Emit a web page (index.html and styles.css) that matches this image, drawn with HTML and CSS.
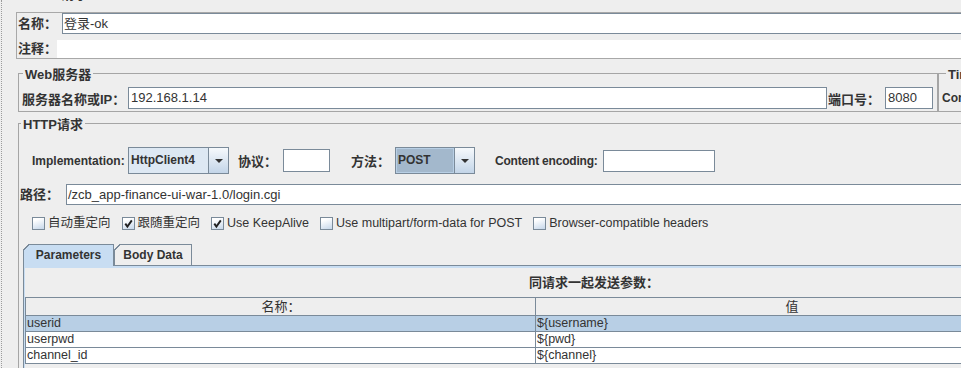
FILE: index.html
```html
<!DOCTYPE html>
<html lang="zh">
<head>
    <meta charset="UTF-8">
    <meta name="viewport" content="width=device-width, initial-scale=1.0">
    <title>HTTP请求</title>
    <link rel="stylesheet" href="styles.css">
</head>
<body>
<div class="screen">
    <div class="gutter"></div>
    <div class="main">
        <div class="cut-title"><span>HTTP请求</span></div>

        <div class="namebox">
            <div class="name-row">
                <span class="lbl cn name-lbl">名称：</span>
                <div class="field name-field">登录-ok</div>
            </div>
            <div class="comment-row">
                <span class="lbl cn comment-lbl">注释：</span>
                <div class="comment-field"></div>
            </div>
        </div>

        <div class="server-row">
            <fieldset class="group web-group">
                <legend>Web服务器</legend>
                <div class="row">
                    <span class="lbl cn host-lbl">服务器名称或IP：</span>
                    <div class="field host-field">192.168.1.14</div>
                    <span class="lbl cn port-lbl">端口号：</span>
                    <div class="field port-field">8080</div>
                </div>
            </fieldset>
            <fieldset class="group timeout-group">
                <legend>Timeouts (milliseconds)</legend>
                <div class="row">
                    <span class="lbl connect-lbl">Connect:</span>
                    <div class="field connect-field"></div>
                </div>
            </fieldset>
        </div>

        <fieldset class="group http-group">
            <legend>HTTP请求</legend>

            <div class="impl-row">
                <span class="lbl impl-lbl">Implementation:</span>
                <div class="combo impl-combo">
                    <span class="combo-value">HttpClient4</span>
                    <span class="combo-btn"><svg width="8" height="4" viewBox="0 0 8 4"><path d="M0 0H8L4 4Z" fill="#333"/></svg></span>
                </div>
                <span class="lbl cn proto-lbl">协议：</span>
                <div class="field proto-field"></div>
                <span class="lbl cn method-lbl">方法：</span>
                <div class="combo method-combo">
                    <span class="combo-value">POST</span>
                    <span class="combo-btn"><svg width="8" height="4" viewBox="0 0 8 4"><path d="M0 0H8L4 4Z" fill="#333"/></svg></span>
                </div>
                <span class="lbl enc-lbl">Content encoding:</span>
                <div class="field enc-field"></div>
            </div>

            <div class="path-row">
                <span class="lbl cn path-lbl">路径：</span>
                <div class="field path-field">/zcb_app-finance-ui-war-1.0/login.cgi</div>
            </div>

            <div class="checks">
                <div class="check"><span class="cb"></span>自动重定向</div>
                <div class="check"><span class="cb"><svg viewBox="0 0 11 11"><path d="M2.3 5.6L4.4 8.6L8.8 2.4" fill="none" stroke="#222" stroke-width="1.9"/></svg></span>跟随重定向</div>
                <div class="check"><span class="cb"><svg viewBox="0 0 11 11"><path d="M2.3 5.6L4.4 8.6L8.8 2.4" fill="none" stroke="#222" stroke-width="1.9"/></svg></span>Use KeepAlive</div>
                <div class="check"><span class="cb"></span>Use multipart/form-data for POST</div>
                <div class="check"><span class="cb"></span>Browser-compatible headers</div>
            </div>

            <div class="tabpane">
                <div class="tabs">
                    <div class="tab active">Parameters</div>
                    <div class="tab body-tab">Body Data</div>
                </div>
                <div class="tab-panel">
                    <div class="params-title">同请求一起发送参数：</div>
                    <table class="params">
                        <thead>
                            <tr><th class="col-name">名称：</th><th class="col-value">值</th></tr>
                        </thead>
                        <tbody>
                            <tr class="sel"><td>userid</td><td>${username}</td></tr>
                            <tr><td>userpwd</td><td>${pwd}</td></tr>
                            <tr><td>channel_id</td><td>${channel}</td></tr>
                        </tbody>
                    </table>
                </div>
            </div>
        </fieldset>
    </div>
</div>
</body>
</html>
```

FILE: styles.css
```css
body {
    margin: 0;
    background-color: #eeeeee;
    font-family: "Liberation Sans", "Noto Sans CJK SC", sans-serif;
    font-size: 12px;
    color: #333;
}
.screen {
    display: flex;
    width: 961px;
    height: 368px;
    overflow: hidden;
}
.gutter {
    flex: none;
    margin-left: 1px;
    border-left: 1px dotted #9c9c9c;
}
.main {
    flex: none;
    width: 1180px;
    margin-left: 14px;
}
.cut-title {
    height: 12px;
    overflow: hidden;
    padding-left: 8px;
}
.cut-title span {
    display: block;
    margin-top: -14px;
    font-size: 14px;
    font-weight: bold;
    line-height: 16px;
}

/* name / comment */
.namebox {
    border: 1px solid #a8a8a8;
    border-right: none;
}
.name-row {
    display: flex;
    height: 21px;
}
.comment-row {
    display: flex;
    height: 18px;
    margin-top: 6px;
}
.lbl {
    flex: none;
    font-weight: bold;
    font-size: 12px;
    white-space: nowrap;
}
.lbl.cn {
    font-size: 13px;
}
.name-lbl {
    width: 44px;
    padding-left: 1px;
    line-height: 21px;
}
.comment-lbl {
    width: 39px;
    padding-left: 1px;
    line-height: 18px;
}
.field {
    flex: none;
    box-sizing: border-box;
    height: 22px;
    border: 1px solid #7a8a99;
    background-color: #fff;
    font-size: 13px;
    line-height: 20px;
    padding-left: 2px;
    white-space: nowrap;
    overflow: hidden;
}
.name-field {
    flex: 1;
    height: 21px;
    line-height: 19px;
    padding-left: 1px;
}
.comment-field {
    flex: 1;
    background-color: #fff;
}

/* titled groups */
.server-row {
    display: flex;
    margin: 4px 0 0 2px;
}
fieldset.group {
    box-sizing: border-box;
    margin: 0;
    padding: 4px 3px 2px;
    border: 1px solid #a5a5a5;
    min-width: 0;
}
legend {
    margin-left: 1px;
    padding: 4px 2px 0;
    font-size: 13px;
    font-weight: bold;
    line-height: 16px;
}
.web-group {
    flex: none;
    width: 920px;
}
.timeout-group {
    flex: none;
    width: 240px;
    margin-left: 4px;
    padding-left: 2px;
}
.timeout-group legend {
    margin-left: 4px;
}
.row {
    display: flex;
    align-items: center;
    height: 22px;
}
.host-lbl {
    width: 106px;
}
.host-field {
    width: 699px;
}
.port-lbl {
    width: 57px;
    margin-left: 1px;
}
.port-field {
    width: 48px;
}
.connect-lbl {
    width: 62px;
}
.connect-field {
    width: 120px;
}

/* http request */
.http-group {
    flex: none;
    margin: 1px 0 0 2px !important;
    padding: 14px 0 0 1px !important;
    border-right: none !important;
}
.impl-row {
    display: flex;
    align-items: center;
    height: 27px;
    padding-left: 12px;
}
.impl-lbl {
    width: 96px;
}
.combo {
    flex: none;
    box-sizing: border-box;
    display: flex;
    height: 27px;
    border: 1px solid #7a8a99;
}
.impl-combo {
    width: 101px;
}
.method-combo {
    width: 80px;
}
.combo-value {
    flex: 1;
    background-color: #dde8f3;
    border-right: 1px solid #7a8a99;
    padding-left: 2px;
    font-weight: bold;
    font-size: 12px;
    line-height: 25px;
}
.method-combo .combo-value {
    background-color: #a3b8cc;
    box-shadow: inset 0 0 0 1px #b8cfe5;
}
.combo-btn {
    flex: none;
    width: 19px;
    display: flex;
    align-items: center;
    justify-content: center;
    background: linear-gradient(#f6f9fc, #c3d5e8);
}
.proto-lbl {
    width: 45px;
    margin-left: 9px;
}
.proto-field {
    width: 47px;
    height: 23px;
}
.method-lbl {
    width: 44px;
    margin-left: 21px;
}
.enc-lbl {
    width: 108px;
    margin-left: 20px;
    letter-spacing: -0.2px;
}
.enc-field {
    width: 112px;
}
.path-row {
    display: flex;
    height: 21px;
    margin-top: 10px;
}
.path-lbl {
    width: 46px;
    line-height: 21px;
}
.path-field {
    flex: 1;
    height: 21px;
    line-height: 19px;
    padding-left: 1px;
}
.checks {
    display: flex;
    align-items: center;
    height: 15px;
    margin-top: 11px;
    padding-left: 12px;
    font-size: 12.5px;
    line-height: 15px;
}
.check {
    display: flex;
    align-items: center;
    gap: 3px;
    margin-right: 11px;
    white-space: nowrap;
}
.cb {
    box-sizing: border-box;
    display: flex;
    width: 13px;
    height: 13px;
    border: 1px solid #7a8a99;
    background: linear-gradient(160deg, #ffffff 20%, #c6d7ea);
}
.cb svg {
    width: 11px;
    height: 11px;
}

/* tabs */
.tabpane {
    margin: 13px 0 0 3px;
}
.tabs {
    position: relative;
    z-index: 1;
    display: flex;
    align-items: flex-start;
    height: 21px;
}
.tab {
    position: relative;
    box-sizing: border-box;
    height: 21px;
    border: 1px solid #7a8a99;
    border-bottom: none;
    font-size: 12px;
    font-weight: bold;
    line-height: 20px;
    text-align: center;
}
.tab::before {
    content: "";
    position: absolute;
    left: -1px;
    top: -1px;
    width: 7px;
    height: 7px;
    background: linear-gradient(135deg, #eeeeee 4.2px, #7a8a99 4.2px, #7a8a99 5.4px, transparent 5.4px);
}
.tab.active {
    width: 91px;
    height: 22px;
    background-color: #c8ddf2;
}
.body-tab {
    width: 78px;
}
.tab-panel {
    height: 120px;
    border-top: 1px solid #7a8a99;
    border-left: 1px solid #7a8a99;
    box-shadow: inset 1px 2px 0 #c8ddf2;
}
.params-title {
    padding: 9px 0 6px 505px;
    font-size: 13px;
    font-weight: bold;
    line-height: 16px;
}
.params {
    width: 1022px;
    margin-left: 1px;
    border-collapse: separate;
    border-spacing: 0;
    border-left: 1px solid #7a8a99;
    table-layout: fixed;
}
.params th,
.params td {
    box-sizing: border-box;
    padding: 0 0 0 1px;
    border-bottom: 1px solid #7a8a99;
    font-size: 12.5px;
    line-height: 15px;
    height: 16px;
    text-align: left;
    white-space: nowrap;
    overflow: hidden;
    background-color: #fff;
}
.params th {
    height: 19px;
    line-height: 17px;
    border-top: 1px solid #7a8a99;
    font-size: 13px;
    font-weight: normal;
    text-align: center;
    background-color: #eeeeee;
}
.params th.col-name,
.params td:first-child {
    border-right: 1px solid #7a8a99;
}
.col-name {
    width: 510px;
}
.params tr.sel td {
    background-color: #b8cfe5;
}
```
